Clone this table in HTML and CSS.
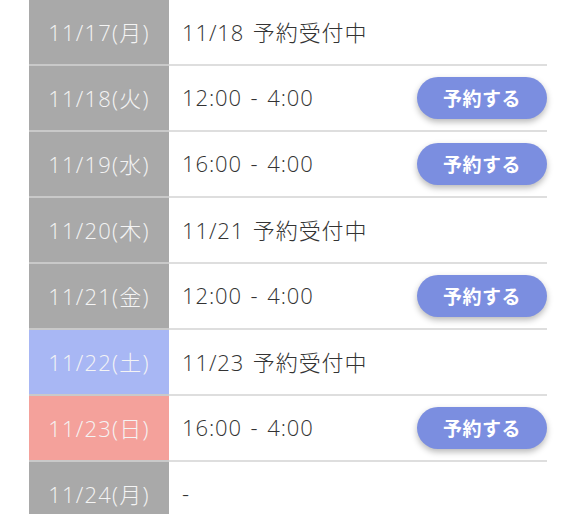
FILE: index.html
```html
<!DOCTYPE html>
<html lang="ja">
<head>
<meta charset="utf-8">
<link rel="stylesheet" href="styles.css">
</head>
<body>
<div class="schedule">
  <div class="row">
    <div class="date weekday">11/17(月)</div>
    <div class="info"><span class="text">11/18 予約受付中</span></div>
  </div>
  <div class="row">
    <div class="date weekday">11/18(火)</div>
    <div class="info"><span class="text">12:00 - 4:00</span><button class="btn">予約する</button></div>
  </div>
  <div class="row">
    <div class="date weekday">11/19(水)</div>
    <div class="info"><span class="text">16:00 - 4:00</span><button class="btn">予約する</button></div>
  </div>
  <div class="row">
    <div class="date weekday">11/20(木)</div>
    <div class="info"><span class="text">11/21 予約受付中</span></div>
  </div>
  <div class="row">
    <div class="date weekday">11/21(金)</div>
    <div class="info"><span class="text">12:00 - 4:00</span><button class="btn">予約する</button></div>
  </div>
  <div class="row">
    <div class="date saturday">11/22(土)</div>
    <div class="info"><span class="text">11/23 予約受付中</span></div>
  </div>
  <div class="row">
    <div class="date sunday">11/23(日)</div>
    <div class="info"><span class="text">16:00 - 4:00</span><button class="btn">予約する</button></div>
  </div>
  <div class="row">
    <div class="date weekday">11/24(月)</div>
    <div class="info"><span class="text">-</span></div>
  </div>
</div>
</body>
</html>
```
FILE: styles.css
```css
html, body {
  margin: 0;
  padding: 0;
  background: #ffffff;
}
body {
  font-family: "Open Sans", "Noto Sans CJK JP", sans-serif;
  overflow: hidden;
}
.schedule {
  margin: 0 29px;
  display: flex;
  flex-direction: column;
}
.row {
  display: flex;
  height: 66px;
}
.date {
  width: 140px;
  flex: none;
  box-sizing: border-box;
  display: flex;
  align-items: center;
  justify-content: center;
  color: #f4f4f4;
  font-size: 22px;
  font-weight: 300;
  letter-spacing: 1.2px;
  padding-bottom: 3px;
  border-bottom: 2px solid #c9c9c9;
}
.weekday { background: #a9a9a9; }
.saturday { background: #a8b7f4; }
.sunday { background: #f4a19b; }
.info {
  flex: 1;
  box-sizing: border-box;
  display: flex;
  align-items: center;
  justify-content: space-between;
  padding-left: 13px;
  border-bottom: 2px solid #dedede;
}
.text {
  font-size: 22px;
  font-weight: 300;
  color: #333333;
  letter-spacing: 0.9px;
  word-spacing: 2px;
  padding-bottom: 3px;
}
.btn {
  width: 130px;
  height: 42px;
  border: none;
  border-radius: 21px;
  background: #7b8ee0;
  color: #ffffff;
  font-family: "Noto Sans CJK JP", sans-serif;
  font-size: 19px;
  font-weight: 700;
  box-shadow: 0 3px 6px rgba(0, 0, 0, 0.28);
  padding: 0 0 2px;
  letter-spacing: 0.5px;
}
```
